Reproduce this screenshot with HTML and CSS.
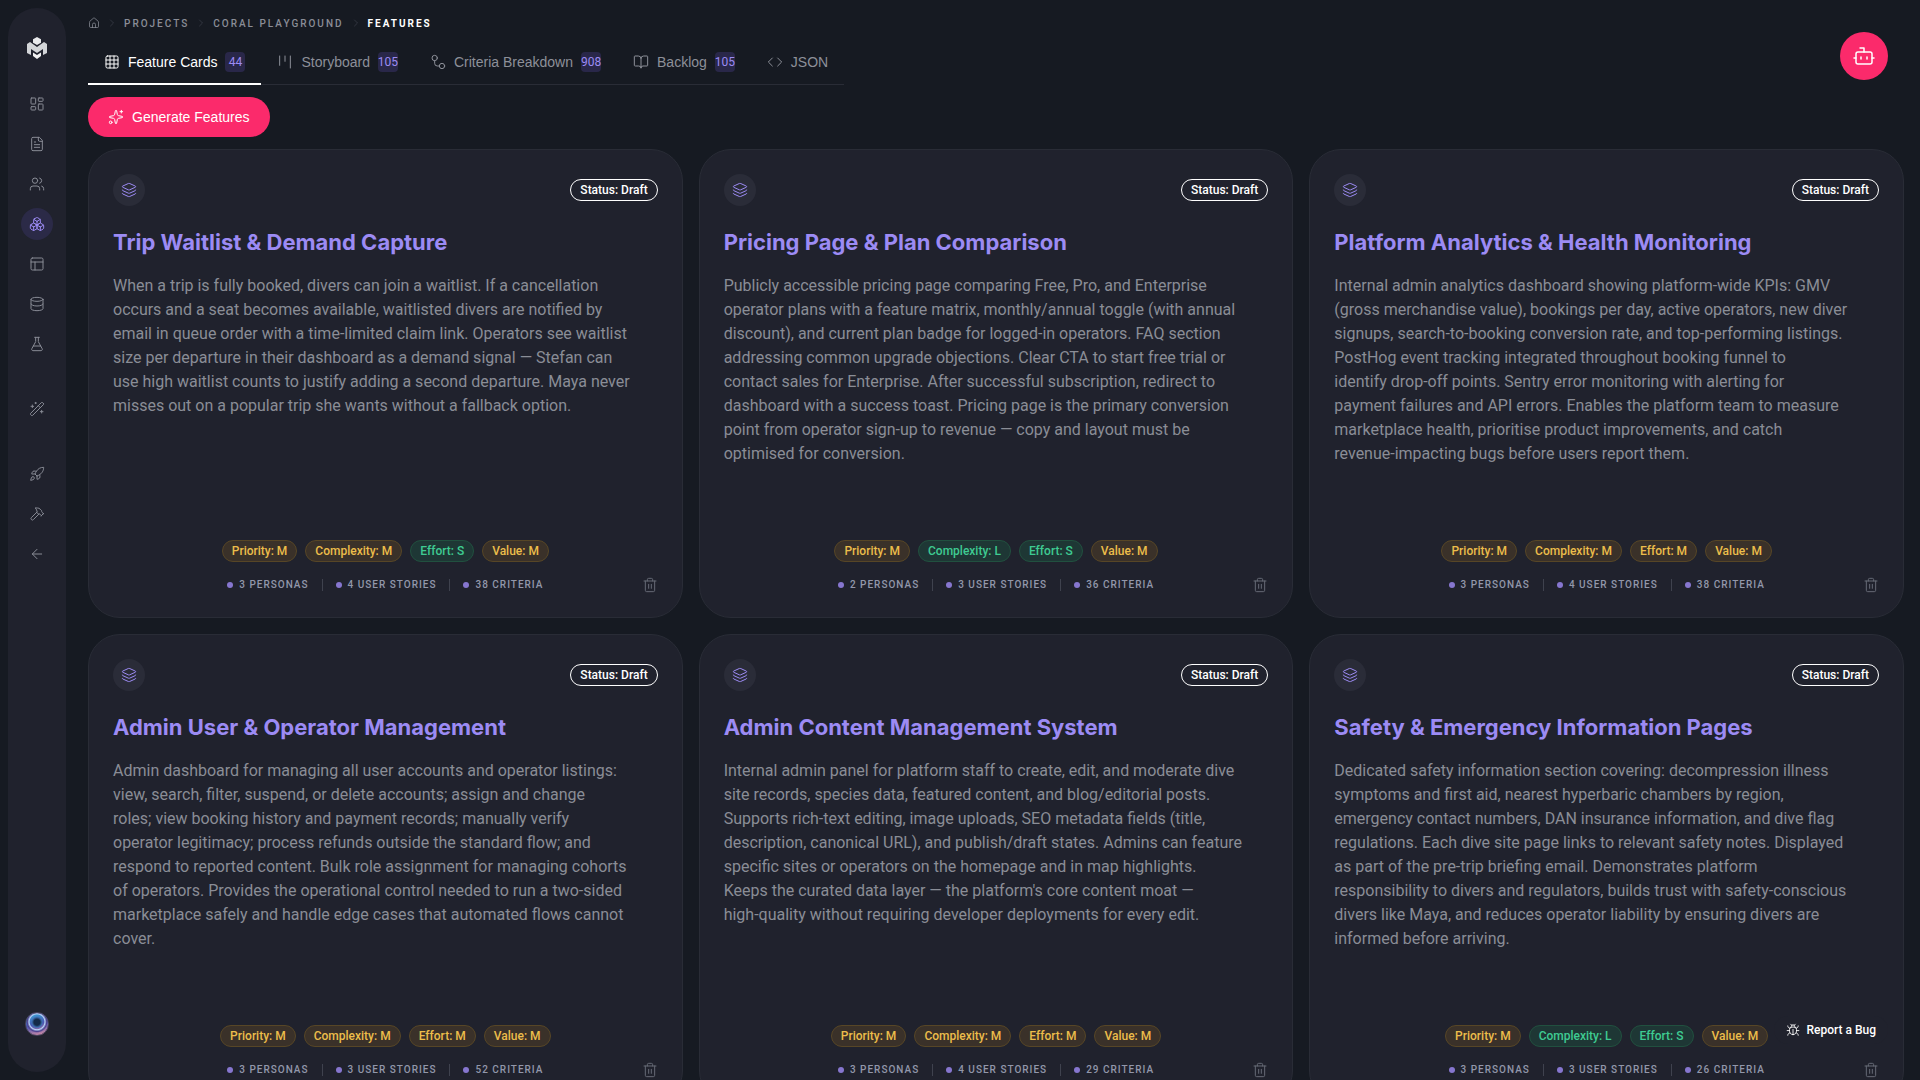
FILE: index.html
```
<!DOCTYPE html>
<html lang="en">
<head>
<meta charset="utf-8">
<meta name="viewport" content="width=device-width, initial-scale=1">
<title>Features</title>
<link rel="stylesheet" href="styles.css">
</head>
<body>
<svg class="sprite" aria-hidden="true">
  <symbol id="i-home" viewBox="0 0 24 24"><path d="M9 21v-6a3 3 0 0 1 6 0v6"/><path d="M3 10a2 2 0 0 1 .709-1.528l7-5.999a2 2 0 0 1 2.582 0l7 5.999A2 2 0 0 1 21 10v9a2 2 0 0 1-2 2H5a2 2 0 0 1-2-2z"/></symbol>
  <symbol id="i-chevron" viewBox="0 0 24 24"><path d="m9 18 6-6-6-6"/></symbol>
  <symbol id="i-dashboard" viewBox="0 0 24 24"><rect x="3" y="3" width="7" height="9" rx="1"/><rect x="14" y="3" width="7" height="5" rx="1"/><rect x="14" y="12" width="7" height="9" rx="1"/><rect x="3" y="16" width="7" height="5" rx="1"/></symbol>
  <symbol id="i-file" viewBox="0 0 24 24"><path d="M15 2H6a2 2 0 0 0-2 2v16a2 2 0 0 0 2 2h12a2 2 0 0 0 2-2V7Z"/><path d="M14 2v4a2 2 0 0 0 2 2h4M10 9H8M16 13H8M16 17H8"/></symbol>
  <symbol id="i-users" viewBox="0 0 24 24"><path d="M16 21v-2a4 4 0 0 0-4-4H6a4 4 0 0 0-4 4v2"/><circle cx="9" cy="7" r="4"/><path d="M22 21v-2a4 4 0 0 0-3-3.87M16 3.13a4 4 0 0 1 0 7.75"/></symbol>
  <symbol id="i-boxes" viewBox="0 0 24 24"><path d="M2.97 12.92A2 2 0 0 0 2 14.63v3.24a2 2 0 0 0 .97 1.71l3 1.8a2 2 0 0 0 2.06 0L12 19v-5.5l-5-3-4.03 2.42Z"/><path d="m7 16.5-4.74-2.85M7 16.5l5-3M7 16.5v5.17"/><path d="M12 13.5V19l3.97 2.38a2 2 0 0 0 2.06 0l3-1.8a2 2 0 0 0 .97-1.71v-3.24a2 2 0 0 0-.97-1.71L17 10.5l-5 3Z"/><path d="m17 16.5-5-3M17 16.5l4.74-2.85M17 16.5v5.17"/><path d="M7.97 4.42A2 2 0 0 0 7 6.13v4.37l5 3 5-3V6.13a2 2 0 0 0-.97-1.71l-3-1.8a2 2 0 0 0-2.06 0l-3 1.8Z"/><path d="M12 8 7.26 5.15M12 8l4.74-2.85M12 13.5V8"/></symbol>
  <symbol id="i-panels" viewBox="0 0 24 24"><rect x="3" y="3" width="18" height="18" rx="2"/><path d="M3 9h18M9 21V9"/></symbol>
  <symbol id="i-database" viewBox="0 0 24 24"><ellipse cx="12" cy="5" rx="9" ry="3"/><path d="M3 5v14a9 3 0 0 0 18 0V5M3 12a9 3 0 0 0 18 0"/></symbol>
  <symbol id="i-flask" viewBox="0 0 24 24"><path d="M14 2v6a2 2 0 0 0 .245.96l5.51 10.08A2 2 0 0 1 18 22H6a2 2 0 0 1-1.755-2.96l5.51-10.08A2 2 0 0 0 10 8V2M6.453 15h11.094M8.5 2h7"/></symbol>
  <symbol id="i-wand" viewBox="0 0 24 24"><path d="m21.64 3.64-1.28-1.28a1.21 1.21 0 0 0-1.72 0L2.36 18.64a1.21 1.21 0 0 0 0 1.72l1.28 1.28a1.2 1.2 0 0 0 1.72 0L21.64 5.36a1.2 1.2 0 0 0 0-1.72M14 7l3 3M5 6v4M19 14v4M10 2v2M7 8H3M21 16h-4M11 3H9"/></symbol>
  <symbol id="i-rocket" viewBox="0 0 24 24"><path d="M4.5 16.5c-1.5 1.26-2 5-2 5s3.74-.5 5-2c.71-.84.7-2.13-.09-2.91a2.18 2.18 0 0 0-2.91-.09M12 15l-3-3a22 22 0 0 1 2-3.95A12.88 12.88 0 0 1 22 2c0 2.72-.78 7.5-6 11a22.35 22.35 0 0 1-4 2M9 12H4s.55-3.03 2-4c1.62-1.08 5 0 5 0M12 15v5s3.03-.55 4-2c1.08-1.62 0-5 0-5"/></symbol>
  <symbol id="i-hammer" viewBox="0 0 24 24"><path d="m15 12-8.373 8.373a1 1 0 1 1-3-3L12 9M18 15l4-4"/><path d="m21.5 11.5-1.914-1.914A2 2 0 0 1 19 8.172V7l-2.26-2.26a6 6 0 0 0-4.202-1.756L9 2.96l.92.82A6.18 6.18 0 0 1 12 8.4V10l2 2h1.172a2 2 0 0 1 1.414.586L18.5 14.5"/></symbol>
  <symbol id="i-back" viewBox="0 0 24 24"><path d="m12 19-7-7 7-7M19 12H5"/></symbol>
  <symbol id="i-grid" viewBox="0 0 24 24"><rect x="3" y="3" width="18" height="18" rx="2"/><path d="M3 9h18M3 15h18M9 3v18M15 3v18"/></symbol>
  <symbol id="i-kanban" viewBox="0 0 24 24"><path d="M4 3v14M12 3v8M20 3v18"/></symbol>
  <symbol id="i-criteria" viewBox="0 0 24 24"><circle cx="7" cy="6" r="4"/><circle cx="18" cy="18" r="4"/><path d="M7 10v4a4 4 0 0 0 4 4h3"/></symbol>
  <symbol id="i-book" viewBox="0 0 24 24"><path d="M12 7v14M3 18a1 1 0 0 1-1-1V4a1 1 0 0 1 1-1h5a4 4 0 0 1 4 4 4 4 0 0 1 4-4h5a1 1 0 0 1 1 1v13a1 1 0 0 1-1 1h-6a3 3 0 0 0-3 3 3 3 0 0 0-3-3z"/></symbol>
  <symbol id="i-code" viewBox="0 0 24 24"><path d="m16 18 6-6-6-6M8 6l-6 6 6 6"/></symbol>
  <symbol id="i-sparkles" viewBox="0 0 24 24"><path d="M11.017 2.814a1 1 0 0 1 1.966 0l1.051 5.558a2 2 0 0 0 1.594 1.594l5.558 1.051a1 1 0 0 1 0 1.966l-5.558 1.051a2 2 0 0 0-1.594 1.594l-1.051 5.558a1 1 0 0 1-1.966 0l-1.051-5.558a2 2 0 0 0-1.594-1.594l-5.558-1.051a1 1 0 0 1 0-1.966l5.558-1.051a2 2 0 0 0 1.594-1.594zM20 2v4M22 4h-4"/><circle cx="4" cy="20" r="2"/></symbol>
  <symbol id="i-layers" viewBox="0 0 24 24"><path d="M12.83 2.18a2 2 0 0 0-1.66 0L2.6 6.08a1 1 0 0 0 0 1.83l8.58 3.91a2 2 0 0 0 1.66 0l8.58-3.9a1 1 0 0 0 0-1.83z"/><path d="M2 12a1 1 0 0 0 .58.91l8.6 3.91a2 2 0 0 0 1.65 0l8.58-3.9A1 1 0 0 0 22 12"/><path d="M2 17a1 1 0 0 0 .58.91l8.6 3.91a2 2 0 0 0 1.65 0l8.58-3.9A1 1 0 0 0 22 17"/></symbol>
  <symbol id="i-trash" viewBox="0 0 24 24"><path d="M3 6h18M19 6v14a2 2 0 0 1-2 2H7a2 2 0 0 1-2-2V6M8 6V4a2 2 0 0 1 2-2h4a2 2 0 0 1 2 2v2M10 11v6M14 11v6"/></symbol>
  <symbol id="i-bot" viewBox="0 0 24 24"><path d="M12 8V4H8"/><rect x="4" y="8" width="16" height="12" rx="2"/><path d="M2 14h2M20 14h2M15 13v2M9 13v2"/></symbol>
  <symbol id="i-bug" viewBox="0 0 24 24"><path d="m8 2 1.88 1.88M14.12 3.88 16 2M9 7.13v-1a3 3 0 1 1 6 0v1"/><path d="M12 20c-3.3 0-6-2.7-6-6v-3a4 4 0 0 1 4-4h4a4 4 0 0 1 4 4v3c0 3.3-2.7 6-6 6M12 20v-9M6.53 9C4.6 8.8 3 7.1 3 5M6 13H2M3 21c0-2.1 1.7-3.9 3.8-4M20.97 5c0 2.1-1.6 3.8-3.5 4M22 13h-4M17.2 17c2.1.1 3.8 1.9 3.8 4"/></symbol>
</svg>

<div class="app">
  <aside class="sidebar">
    <a class="logo" href="#" aria-label="Home">
      <svg viewBox="0 0 24 24" width="24" height="24"><path d="m12 1 4 2.2v3.6L12 9 8 6.800V3.200z" fill="#e9eaec"/><path d="M2 8l3-2 7 5 7-5 3 2v9l-4 2v-6l-6 4-6-4v6l-4-2z" fill="#d3d5d8"/><path d="m8 16.500 4 2.500 4-2.500V20l-4 3-4-3z" fill="#f1f1f2"/></svg>
    </a>
    <nav class="side-nav" aria-label="Main">
      <a class="side-link" href="#" aria-label="Dashboard"><svg class="icon"><use href="#i-dashboard"/></svg></a>
      <a class="side-link" href="#" aria-label="Documents"><svg class="icon"><use href="#i-file"/></svg></a>
      <a class="side-link" href="#" aria-label="Personas"><svg class="icon"><use href="#i-users"/></svg></a>
      <a class="side-link active" href="#" aria-label="Features"><svg class="icon"><use href="#i-boxes"/></svg></a>
      <a class="side-link" href="#" aria-label="Layouts"><svg class="icon"><use href="#i-panels"/></svg></a>
      <a class="side-link" href="#" aria-label="Data"><svg class="icon"><use href="#i-database"/></svg></a>
      <a class="side-link" href="#" aria-label="Tests"><svg class="icon"><use href="#i-flask"/></svg></a>
      <span class="side-gap"></span>
      <a class="side-link" href="#" aria-label="Generate"><svg class="icon"><use href="#i-wand"/></svg></a>
      <span class="side-gap"></span>
      <a class="side-link" href="#" aria-label="Launch"><svg class="icon"><use href="#i-rocket"/></svg></a>
      <a class="side-link" href="#" aria-label="Build"><svg class="icon"><use href="#i-hammer"/></svg></a>
      <a class="side-link" href="#" aria-label="Back"><svg class="icon"><use href="#i-back"/></svg></a>
    </nav>
    <button class="avatar" type="button" aria-label="Account"></button>
  </aside>

  <main class="main">
    <nav class="crumbs" aria-label="Breadcrumb">
      <a href="#" aria-label="Home"><svg class="icon crumb-icon"><use href="#i-home"/></svg></a>
      <svg class="icon crumb-icon sep"><use href="#i-chevron"/></svg>
      <a href="#">PROJECTS</a>
      <svg class="icon crumb-icon sep"><use href="#i-chevron"/></svg>
      <a href="#">CORAL PLAYGROUND</a>
      <svg class="icon crumb-icon sep"><use href="#i-chevron"/></svg>
      <span class="current">FEATURES</span>
    </nav>

    <div class="tabs" role="tablist">
      <button class="tab active" role="tab" aria-selected="true"><svg class="icon"><use href="#i-grid"/></svg>Feature Cards<span class="count">44</span></button>
      <button class="tab" role="tab"><svg class="icon"><use href="#i-kanban"/></svg>Storyboard<span class="count">105</span></button>
      <button class="tab" role="tab"><svg class="icon"><use href="#i-criteria"/></svg>Criteria Breakdown<span class="count">908</span></button>
      <button class="tab" role="tab"><svg class="icon"><use href="#i-book"/></svg>Backlog<span class="count">105</span></button>
      <button class="tab" role="tab"><svg class="icon"><use href="#i-code"/></svg>JSON</button>
    </div>

    <button class="generate" type="button"><svg class="icon"><use href="#i-sparkles"/></svg>Generate Features</button>

    <section class="cards">
      <article class="card">
        <header class="card-head"><span class="badge-icon"><svg class="icon"><use href="#i-layers"/></svg></span><span class="status">Status: Draft</span></header>
        <h2>Trip Waitlist &amp; Demand Capture</h2>
        <p class="desc">When a trip is fully booked, divers can join a waitlist. If a cancellation occurs and a seat becomes available, waitlisted divers are notified by email in queue order with a time-limited claim link. Operators see waitlist size per departure in their dashboard as a demand signal — Stefan can use high waitlist counts to justify adding a second departure. Maya never misses out on a popular trip she wants without a fallback option.</p>
        <div class="tags"><span class="tag">Priority: M</span><span class="tag">Complexity: M</span><span class="tag green">Effort: S</span><span class="tag">Value: M</span></div>
        <footer class="card-foot"><ul class="stats"><li>3 PERSONAS</li><li>4 USER STORIES</li><li>38 CRITERIA</li></ul><button class="delete" type="button" aria-label="Delete"><svg class="icon"><use href="#i-trash"/></svg></button></footer>
      </article>

      <article class="card">
        <header class="card-head"><span class="badge-icon"><svg class="icon"><use href="#i-layers"/></svg></span><span class="status">Status: Draft</span></header>
        <h2>Pricing Page &amp; Plan Comparison</h2>
        <p class="desc">Publicly accessible pricing page comparing Free, Pro, and Enterprise operator plans with a feature matrix, monthly/annual toggle (with annual discount), and current plan badge for logged-in operators. FAQ section addressing common upgrade objections. Clear CTA to start free trial or contact sales for Enterprise. After successful subscription, redirect to dashboard with a success toast. Pricing page is the primary conversion point from operator sign-up to revenue — copy and layout must be optimised for conversion.</p>
        <div class="tags"><span class="tag">Priority: M</span><span class="tag green">Complexity: L</span><span class="tag green">Effort: S</span><span class="tag">Value: M</span></div>
        <footer class="card-foot"><ul class="stats"><li>2 PERSONAS</li><li>3 USER STORIES</li><li>36 CRITERIA</li></ul><button class="delete" type="button" aria-label="Delete"><svg class="icon"><use href="#i-trash"/></svg></button></footer>
      </article>

      <article class="card">
        <header class="card-head"><span class="badge-icon"><svg class="icon"><use href="#i-layers"/></svg></span><span class="status">Status: Draft</span></header>
        <h2>Platform Analytics &amp; Health Monitoring</h2>
        <p class="desc">Internal admin analytics dashboard showing platform-wide KPIs: GMV (gross merchandise value), bookings per day, active operators, new diver signups, search-to-booking conversion rate, and top-performing listings. PostHog event tracking integrated throughout booking funnel to<br>identify drop-off points. Sentry error monitoring with alerting for<br>payment failures and API errors. Enables the platform team to measure marketplace health, prioritise product improvements, and catch<br>revenue-impacting bugs before users report them.</p>
        <div class="tags"><span class="tag">Priority: M</span><span class="tag">Complexity: M</span><span class="tag">Effort: M</span><span class="tag">Value: M</span></div>
        <footer class="card-foot"><ul class="stats"><li>3 PERSONAS</li><li>4 USER STORIES</li><li>38 CRITERIA</li></ul><button class="delete" type="button" aria-label="Delete"><svg class="icon"><use href="#i-trash"/></svg></button></footer>
      </article>

      <article class="card">
        <header class="card-head"><span class="badge-icon"><svg class="icon"><use href="#i-layers"/></svg></span><span class="status">Status: Draft</span></header>
        <h2>Admin User &amp; Operator Management</h2>
        <p class="desc">Admin dashboard for managing all user accounts and operator listings: view, search, filter, suspend, or delete accounts; assign and change<br>roles; view booking history and payment records; manually verify<br>operator legitimacy; process refunds outside the standard flow; and<br>respond to reported content. Bulk role assignment for managing cohorts of operators. Provides the operational control needed to run a two-sided marketplace safely and handle edge cases that automated flows cannot cover.</p>
        <div class="tags"><span class="tag">Priority: M</span><span class="tag">Complexity: M</span><span class="tag">Effort: M</span><span class="tag">Value: M</span></div>
        <footer class="card-foot"><ul class="stats"><li>3 PERSONAS</li><li>3 USER STORIES</li><li>52 CRITERIA</li></ul><button class="delete" type="button" aria-label="Delete"><svg class="icon"><use href="#i-trash"/></svg></button></footer>
      </article>

      <article class="card">
        <header class="card-head"><span class="badge-icon"><svg class="icon"><use href="#i-layers"/></svg></span><span class="status">Status: Draft</span></header>
        <h2>Admin Content Management System</h2>
        <p class="desc">Internal admin panel for platform staff to create, edit, and moderate dive site records, species data, featured content, and blog/editorial posts. Supports rich-text editing, image uploads, SEO metadata fields (title, description, canonical URL), and publish/draft states. Admins can feature specific sites or operators on the homepage and in map highlights. Keeps the curated data layer — the platform's core content moat — <span class="keep">high-quality</span> without requiring developer deployments for every edit.</p>
        <div class="tags"><span class="tag">Priority: M</span><span class="tag">Complexity: M</span><span class="tag">Effort: M</span><span class="tag">Value: M</span></div>
        <footer class="card-foot"><ul class="stats"><li>3 PERSONAS</li><li>4 USER STORIES</li><li>29 CRITERIA</li></ul><button class="delete" type="button" aria-label="Delete"><svg class="icon"><use href="#i-trash"/></svg></button></footer>
      </article>

      <article class="card">
        <header class="card-head"><span class="badge-icon"><svg class="icon"><use href="#i-layers"/></svg></span><span class="status">Status: Draft</span></header>
        <h2>Safety &amp; Emergency Information Pages</h2>
        <p class="desc">Dedicated safety information section covering: decompression illness symptoms and first aid, nearest hyperbaric chambers by region, emergency contact numbers, DAN insurance information, and dive flag regulations. Each dive site page links to relevant safety notes. Displayed as part of the pre-trip briefing email. Demonstrates platform responsibility to divers and regulators, builds trust with safety-conscious divers like Maya, and reduces operator liability by ensuring divers are informed before arriving.</p>
        <div class="tags"><span class="tag">Priority: M</span><span class="tag green">Complexity: L</span><span class="tag green">Effort: S</span><span class="tag">Value: M</span></div>
        <footer class="card-foot"><ul class="stats"><li>3 PERSONAS</li><li>3 USER STORIES</li><li>26 CRITERIA</li></ul><button class="delete" type="button" aria-label="Delete"><svg class="icon"><use href="#i-trash"/></svg></button></footer>
      </article>
    </section>
  </main>
</div>

<button class="assistant" type="button" aria-label="Assistant"><svg class="icon"><use href="#i-bot"/></svg></button>
<button class="report" type="button"><svg class="icon"><use href="#i-bug"/></svg>Report a Bug</button>
</body>
</html>
```
FILE: styles.css
```
:root {
  --bg: #161a22;
  --panel: #20222d;
  --line: #292c36;
  --muted: #8a8d96;
  --violet: #9c8bf4;
  --pink: #fb2a6b;
}

* { box-sizing: border-box; }

body {
  margin: 0;
  background: var(--bg);
  color: #fff;
  font-family: Roboto, "Liberation Sans", sans-serif;
  font-size: 14px;
}

a { color: inherit; text-decoration: none; }

button {
  margin: 0;
  padding: 0;
  border: 0;
  background: none;
  color: inherit;
  font: inherit;
  cursor: pointer;
}

.sprite { position: absolute; width: 0; height: 0; }

.icon {
  display: block;
  flex: none;
  width: 16px;
  height: 16px;
  fill: none;
  stroke: currentColor;
  stroke-width: 1.5;
  stroke-linecap: round;
  stroke-linejoin: round;
}

.app { display: flex; height: 100vh; }

/* Sidebar */
.sidebar {
  display: flex;
  flex: none;
  flex-direction: column;
  align-items: center;
  width: 58px;
  margin: 8px;
  padding: 28px 0 36px;
  border-radius: 29px;
  background: var(--panel);
}

.logo { display: block; height: 24px; margin-bottom: 28px; }

.side-nav { display: flex; flex-direction: column; gap: 8px; }

.side-link {
  display: grid;
  place-items: center;
  width: 32px;
  height: 32px;
  border-radius: 50%;
  color: #888b95;
}

.side-link.active { background: #2b2a47; color: var(--violet); }

.side-gap { height: 17px; }

.avatar {
  width: 24px;
  height: 24px;
  margin-top: auto;
  border: 1px solid #4b4660;
  border-radius: 50%;
  background:
    radial-gradient(circle at 50% 42%, #142a48 0 18%, #3d6fb0 30%, transparent 36%),
    radial-gradient(circle at 50% 40%, transparent 40%, #b9d4f6 46%, #4a3f8e 56%, transparent 64%),
    linear-gradient(165deg, #37b3dc, #4a57b4 50%, #e08fa0);
}

/* Page */
.main {
  flex: 1;
  min-width: 0;
  padding: 16px 16px 16px 14px;
  overflow-y: auto;
  scrollbar-width: none;
}

.crumbs {
  display: flex;
  align-items: center;
  gap: 6px;
  height: 14px;
  color: #8a8d97;
  font-size: 10px;
  font-weight: 500;
  letter-spacing: 2px;
}

.crumb-icon { width: 12px; height: 12px; }
.crumbs .sep { color: #3b3e49; }
.crumbs .current { color: #fff; font-weight: 700; }

.tabs {
  display: flex;
  width: max-content;
  max-width: 100%;
  margin-top: 11px;
  border-bottom: 1px solid var(--line);
}

.tab {
  display: flex;
  align-items: center;
  gap: 8px;
  height: 44px;
  margin-bottom: -1px;
  padding: 0 16px;
  border-bottom: 2px solid transparent;
  color: #8d9099;
  font-family: "Liberation Sans", Roboto, sans-serif;
}

.tab.active { border-color: #fff; color: #fff; }

.count {
  display: flex;
  justify-content: center;
  width: 20px;
  border-radius: 4px;
  background: #292749;
  color: var(--violet);
  font-family: Roboto, sans-serif;
  font-size: 12px;
  line-height: 20px;
}

.generate {
  display: flex;
  align-items: center;
  gap: 8px;
  height: 40px;
  margin: 12px 0;
  padding: 0 20px;
  border-radius: 20px;
  background: var(--pink);
  font-family: "Liberation Sans", Roboto, sans-serif;
}

/* Feature cards */
.cards {
  display: grid;
  grid-template-columns: repeat(auto-fill, minmax(500px, 1fr));
  gap: 16px;
}

.card {
  display: flex;
  flex-direction: column;
  min-height: 469px;
  padding: 24px;
  border: 1px solid var(--line);
  border-radius: 32px;
  background: var(--panel);
}

.card-head { display: flex; justify-content: space-between; align-items: center; }

.badge-icon {
  display: grid;
  place-items: center;
  width: 32px;
  height: 32px;
  border-radius: 50%;
  background: #2a2c38;
  color: var(--violet);
}

.status,
.tag {
  padding: 0 9px;
  border: 1px solid #fff;
  border-radius: 11px;
  font-size: 12px;
  font-weight: 500;
  line-height: 20px;
}

h2 {
  margin: 20px 0 16px;
  color: var(--violet);
  font-family: Inter, Roboto, sans-serif;
  font-size: 22px;
  font-weight: 700;
  line-height: 32px;
}

.desc {
  margin: 0 0 24px;
  padding-right: 24px;
  color: var(--muted);
  font-size: 16px;
  line-height: 24px;
}

.keep { white-space: nowrap; }

.tags {
  display: flex;
  flex-wrap: wrap;
  justify-content: center;
  gap: 8px;
  margin-top: auto;
}

.tag { border-color: #574626; background: #3a3129; color: #ecbd4b; }
.tag.green { border-color: #21503f; background: #1e3735; color: #3ecb92; }

.card-foot {
  display: grid;
  grid-template-columns: 1fr auto 1fr;
  align-items: center;
  height: 16px;
  margin-top: 15px;
}

.stats {
  display: flex;
  grid-column: 2;
  margin: 0;
  padding: 0;
  list-style: none;
  color: #9297aa;
  font-size: 10px;
  font-weight: 500;
  letter-spacing: 1px;
  line-height: 12px;
}

.stats li { display: flex; align-items: center; gap: 6px; }

.stats li::before {
  width: 6px;
  height: 6px;
  border-radius: 50%;
  background: #8676cf;
  content: "";
}

.stats li + li { margin-left: 13px; padding-left: 13px; border-left: 1px solid #3f424e; }

.delete { justify-self: end; color: #666a76; }

/* Floating controls */
.assistant {
  position: fixed;
  top: 32px;
  right: 32px;
  display: grid;
  place-items: center;
  width: 48px;
  height: 48px;
  border-radius: 50%;
  background: var(--pink);
}

.assistant .icon { width: 24px; height: 24px; }

.report {
  position: fixed;
  right: 32px;
  bottom: 36px;
  display: flex;
  align-items: center;
  gap: 6px;
  height: 28px;
  padding: 0 12px;
  border-radius: 14px;
  background: var(--panel);
  font-size: 12px;
  font-weight: 500;
}

.report .icon { width: 14px; height: 14px; }
```
